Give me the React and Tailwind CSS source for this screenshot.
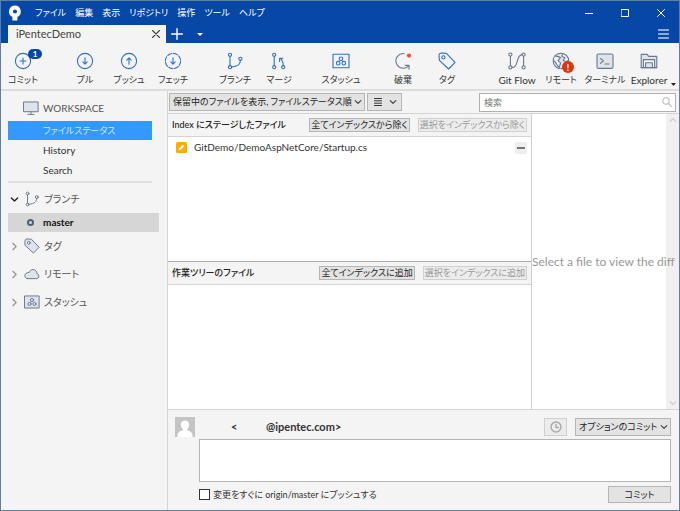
import React from "react";

const ICON = "h-[18px] w-[18px]";
const BLUE = "#2f6fd0";
const SLATE = "#6b7891";

function Svg({ children, color = BLUE, className = ICON, box = "0 0 18 18", width = 1.1 }) {
  return (
    <svg
      className={className}
      viewBox={box}
      fill="none"
      stroke={color}
      strokeWidth={width}
      strokeLinecap="round"
      strokeLinejoin="round"
      aria-hidden="true"
    >
      {children}
    </svg>
  );
}

function BranchShape() {
  return (
    <>
      <circle cx="4" cy="2.8" r="1.6" />
      <circle cx="4" cy="15.2" r="1.6" />
      <circle cx="14.400" cy="6.8" r="1.6" />
      <path d="M4 4.4v9.2M14.400 8.400c0 3.600-2.600 6-8.800 6.600" />
    </>
  );
}

function TagShape({ fill = "none" }) {
  return (
    <>
      <path d="M1 3.400A2.400 2.400 0 0 1 3.400 1l5 .4 8.600 9-6.400 6.600-9.200-8.600z" fill={fill} />
      <circle cx="5.4" cy="5.4" r="1.6" fill="#f4f4f4" />
    </>
  );
}

function StashShape({ fill = "none" }) {
  return (
    <>
      <rect x="1" y="2.2" width="16" height="13.6" fill={fill} />
      <circle cx="9" cy="6.8" r="1.8" />
      <circle cx="6.2" cy="11.2" r="1.8" />
      <circle cx="11.8" cy="11.2" r="1.8" />
    </>
  );
}

const commitIcon = (
  <Svg>
    <circle cx="9" cy="9" r="7.6" />
    <path d="M9 6v6M6 9h6" />
  </Svg>
);
const pullIcon = (
  <Svg>
    <circle cx="9" cy="9" r="7.6" />
    <path d="M9 5.8v6.2M6.8 9.9 9 12.1l2.2-2.2" />
  </Svg>
);
const pushIcon = (
  <Svg>
    <circle cx="9" cy="9" r="7.6" />
    <path d="M9 12.2V6M6.8 8.1 9 5.9l2.2 2.2" />
  </Svg>
);
const fetchIcon = (
  <Svg>
    <circle cx="9" cy="9" r="7.6" strokeDasharray="4.4 1.57" />
    <path d="M9 5.8v6.2M6.8 9.9 9 12.1l2.2-2.2" />
  </Svg>
);
const mergeIcon = (
  <Svg>
    <circle cx="4.2" cy="2.8" r="1.6" />
    <circle cx="4.2" cy="15.2" r="1.6" />
    <circle cx="13.2" cy="15.2" r="1.6" />
    <path d="M4.2 4.4v9.2M13.2 13.600c0-3-.2-5-2.600-7M9.600 9.400V6.200h3.200" />
  </Svg>
);
const discardIcon = (
  <Svg color={SLATE}>
    <path d="M10 1.6a7.3 7.3 0 1 0 4.6 12.2M15 17.2v-3.8h-3.8" />
    <circle cx="15" cy="3.6" r="2.100" fill="#ff4b2b" stroke="none" />
  </Svg>
);
const flowIcon = (
  <Svg color={SLATE}>
    <circle cx="2.4" cy="2.6" r="1.6" />
    <circle cx="2.4" cy="15.4" r="1.6" />
    <circle cx="15.6" cy="2.6" r="1.6" />
    <circle cx="15.6" cy="15.4" r="1.6" />
    <path d="M2.4 4.2v9.6M15.6 4.2v9.6M4 15.4h1c5.6 0 3-12.8 9-12.8" />
  </Svg>
);
const globeIcon = (
  <Svg color={SLATE}>
    <circle cx="9" cy="9" r="7.8" fill="#dfe3ea" />
    <path
      d="M3 4c2 .6 4 .2 5.4 1.6L6 8.6l2.6 2.2-1.4 4.6C4.6 14 4.8 10.400 1.600 8.600M10.500 1.600 10 4.400l3 1.400-1.800 2.600 3.200 1.400 2-1.600"
      fill="#f4f4f4"
    />
  </Svg>
);
const terminalIcon = (
  <Svg color={SLATE}>
    <rect x="1" y="2" width="16" height="14.400" rx="1.500" fill="#dfe3ea" />
    <path d="m4.500 6.500 3 2.400-3 2.400M9 12h4" />
  </Svg>
);
const explorerIcon = (
  <Svg color={SLATE}>
    <path d="M1.200 15.600V2.400h6l1.400 2h8.200v11.200z" fill="#dfe3ea" />
    <path d="M3.400 15.600V7.600h11.200v8" fill="#f4f4f4" />
    <path d="M5.600 15.600v-4.800h6.800v4.800M1.200 15.600h15.600" fill="#dfe3ea" />
  </Svg>
);

function Tool({ icon, label, badge, latin = false }) {
  return (
    <button className="relative flex w-11 flex-col items-center gap-[2px] whitespace-nowrap pt-[9px]">
      {icon}
      <span className={latin ? "text-[10px] leading-4 text-[#333]" : "text-[9px] leading-4 text-[#333]"}>
        {label}
      </span>
      {badge}
    </button>
  );
}

function Chevron({ className }) {
  return (
    <Svg className={className} box="0 0 8 8" color="currentColor" width={1.2}>
      <path d="m1.200 2.600 2.800 2.800 2.800-2.800" />
    </Svg>
  );
}

function DropDown({ label, className }) {
  return (
    <div className={"relative h-[18px] shrink-0 " + className}>
      <select
        aria-label={label}
        className="h-full w-full appearance-none border border-[#b5b5b5] bg-[#e3e3e3] pl-[3px] pr-3 text-[9px] text-[#222]"
      >
        <option>{label}</option>
      </select>
      <Chevron className="pointer-events-none absolute right-[3px] top-1/2 h-2 w-2 -translate-y-1/2 text-[#444]" />
    </div>
  );
}

function StageHeader({ title, all, selected }) {
  return (
    <div className="flex h-[23px] shrink-0 items-center whitespace-nowrap border-b border-[#d4d4d4] pl-1 pr-1">
      <h2 className="flex-1 text-[9px] font-medium text-[#222]">{title}</h2>
      <button className="h-[14px] border border-[#b5b5b5] bg-[#e3e3e3] px-px text-[9px] leading-3 text-[#222]">
        {all}
      </button>
      <button
        disabled
        className="ml-2 h-[14px] border border-[#d0d0d0] bg-[#ececec] px-px text-[9px] leading-3 text-[#999]"
      >
        {selected}
      </button>
    </div>
  );
}

function Section({ open, icon, label }) {
  return (
    <button className="flex h-7 w-full items-center pl-2 text-left text-[10px] text-[#555]">
      <Chevron
        className={open ? "h-[9px] w-[9px] text-[#222]" : "h-[9px] w-[9px] -rotate-90 text-[#999]"}
      />
      <span className="ml-[5px] mr-1">{icon}</span>
      {label}
    </button>
  );
}

const sideIcon = "h-4 w-4";

export default function App() {
  return (
    <div className="flex min-h-screen flex-col overflow-hidden border border-[#5f7fa6] bg-[#f4f4f4] font-['Lato','Noto_Sans_CJK_JP',sans-serif] text-[10px] text-[#333] [font-feature-settings:'palt']">
      <header className="bg-[#0747a6] text-white">
        <div className="flex h-6 items-center">
          <svg className="ml-[7px] mr-[13px] h-4 w-[14px]" viewBox="0 0 14 16" aria-hidden="true">
            <path
              d="M7 .5a6 6 0 0 0-2.600 11.400V15.500h5v-3.600A6 6 0 0 0 7 .5zm0 4a2 2 0 1 1 0 4.100 2 2 0 0 1 0-4.100z"
              fill="#fff"
              fillRule="evenodd"
            />
          </svg>
          <nav className="flex flex-1 gap-[9px] whitespace-nowrap text-[9px]">
            <button>ファイル</button>
            <button>編集</button>
            <button>表示</button>
            <button>リポジトリ</button>
            <button>操作</button>
            <button>ツール</button>
            <button>ヘルプ</button>
          </nav>
          <div className="flex">
            <button aria-label="最小化" className="flex h-6 w-9 items-center justify-center">
              <Svg className="h-2 w-2" box="0 0 8 8" color="#fff" width={1}>
                <path d="M0 4.500h8" />
              </Svg>
            </button>
            <button aria-label="最大化" className="flex h-6 w-9 items-center justify-center">
              <Svg className="h-2 w-2" box="0 0 8 8" color="#fff" width={1}>
                <path d="M.5.5h7v7h-7z" />
              </Svg>
            </button>
            <button aria-label="閉じる" className="flex h-6 w-9 items-center justify-center">
              <Svg className="h-2 w-2" box="0 0 8 8" color="#fff" width={1}>
                <path d="m.5.500 7 7m0-7-7 7" />
              </Svg>
            </button>
          </div>
        </div>
        <div className="flex h-[18px] items-center">
          <div className="ml-[7px] flex h-full w-[158px] items-center bg-[#f4f4f4] pl-2 pr-[6px] text-[#444]">
            <button className="flex-1 text-left text-[11px]">iPentecDemo</button>
            <button aria-label="タブを閉じる">
              <Svg className="h-2 w-2" box="0 0 8 8" color="#444" width={1.1}>
                <path d="m.5.500 7 7m0-7-7 7" />
              </Svg>
            </button>
          </div>
          <button aria-label="新しいタブ" className="ml-[5px]">
            <Svg className="h-3 w-3" box="0 0 12 12" color="#fff" width={1.400}>
              <path d="M6 .7v10.600M.7 6h10.600" />
            </Svg>
          </button>
          <button aria-label="タブ一覧" className="ml-[14px]">
            <svg className="h-[3px] w-[6px]" viewBox="0 0 6 3" fill="#fff" aria-hidden="true">
              <path d="M0 0h6L3 3z" />
            </svg>
          </button>
          <button aria-label="メニュー" className="ml-auto mr-[10px]">
            <Svg className="h-[10px] w-[11px]" box="0 0 11 10" color="#b9cbe6" width={1.500}>
              <path d="M.5 1h10M.5 5h10M.5 9h10" />
            </Svg>
          </button>
        </div>
      </header>

      <div className="relative flex h-[48px] justify-between border-b-2 border-[#dcdcdc] pr-2">
        <div className="flex gap-[18px]">
          <Tool
            icon={commitIcon}
            label="コミット"
            badge={
              <span className="absolute left-[27px] top-[6px] h-[10px] w-[14px] rounded-[5px] bg-[#0747a6] text-center text-[8px] font-bold leading-[10px] text-white">
                1
              </span>
            }
          />
          <div className="flex">
            <Tool icon={pullIcon} label="プル" />
            <Tool icon={pushIcon} label="プッシュ" />
            <Tool icon={fetchIcon} label="フェッチ" />
          </div>
          <div className="flex">
            <Tool icon={<Svg><BranchShape /></Svg>} label="ブランチ" />
            <Tool icon={mergeIcon} label="マージ" />
          </div>
          <Tool icon={<Svg><StashShape /></Svg>} label="スタッシュ" />
          <div className="flex">
            <Tool icon={discardIcon} label="破棄" />
            <Tool icon={<Svg><TagShape /></Svg>} label="タグ" />
          </div>
        </div>
        <div className="flex">
          <Tool latin icon={flowIcon} label="Git Flow" />
          <Tool
            icon={globeIcon}
            label="リモート"
            badge={
              <span className="absolute left-[23px] top-[18px] h-3 w-3 rounded-full bg-[#de350b] text-center text-[10px] font-bold leading-3 text-white">
                !
              </span>
            }
          />
          <Tool icon={terminalIcon} label="ターミナル" />
          <Tool latin icon={explorerIcon} label="Explorer" />
        </div>
        <svg className="absolute bottom-[3px] right-[3px] h-[3px] w-[5px]" viewBox="0 0 5 3" aria-hidden="true">
          <path d="M0 0h5L2.500 3z" fill="#222" />
        </svg>
      </div>

      <div className="flex flex-1">
        <aside className="w-[167px] shrink-0 border-r border-[#d4d4d4] pl-[7px] pr-2 pt-[6px]">
          <div className="flex h-[22px] items-center pl-[15px] text-[10px] text-[#555]">
            <Svg className="mr-1 h-4 w-4" color={SLATE}>
              <path d="M1 2.200h16v11H1z" fill="#dfe3ea" />
              <path d="M9 13.200v3M5.500 16.200h7" />
            </Svg>
            WORKSPACE
          </div>
          <div className="mr-[7px] mt-[2px] flex flex-col border-b-2 border-[#dedede] pb-[1px] text-[10px]">
            <button className="h-[19px] bg-[#3399ff] pl-[35px] text-left text-[9px] text-[#d5e6fa]">ファイルステータス</button>
            <button className="h-5 pl-[35px] text-left">History</button>
            <button className="h-5 pl-[35px] text-left">Search</button>
          </div>
          <div className="-ml-[6px] pt-[2px]">
            <Section
              open
              icon={<Svg className={sideIcon} color={SLATE}><BranchShape /></Svg>}
              label="ブランチ"
            />
          </div>
          <button className="flex h-[19px] w-full items-center bg-[#d6d6d6] pl-[19px] text-[10px] font-bold text-[#111]">
            <span className="mr-[9px] h-[7px] w-[7px] rounded-full border-2 border-[#505f79]" />
            master
          </button>
          <div className="-ml-[6px]">
            <Section
              icon={<Svg className={sideIcon} color={SLATE}><TagShape fill="#dfe3ea" /></Svg>}
              label="タグ"
            />
            <Section
              icon={
                <Svg className={sideIcon} color={SLATE}>
                  <path
                    d="M4 14.200h10.200a2.800 2.800 0 0 0 .5-5.500C14.500 5.800 12.600 4 10 4 7.900 4 6.300 5.300 5.800 7.300 3 7.200 1 8.600 1 11c0 1.800 1.200 3.200 3 3.200z"
                    fill="#dfe3ea"
                  />
                </Svg>
              }
              label="リモート"
            />
            <Section
              icon={<Svg className={sideIcon} color={SLATE}><StashShape fill="#dfe3ea" /></Svg>}
              label="スタッシュ"
            />
          </div>
        </aside>

        <main className="flex min-w-0 flex-1 flex-col">
          <div className="flex h-[23px] items-center gap-[2px] border-b border-[#d4d4d4] pl-[1px] pr-[3px]">
            <DropDown label="保留中のファイルを表示, ファイルステータス順" className="min-w-[187px]" />
            <button
              aria-label="表示形式"
              className="flex h-[18px] w-[35px] items-center justify-between border border-[#b5b5b5] bg-[#e3e3e3] pl-[6px] pr-1 text-[#444]"
            >
              <Svg className="h-2 w-2" box="0 0 8 8" color="#333" width={1}>
                <path d="M.5.500h7M.5 2.800h7M.5 5.200h7M.5 7.500h7" />
              </Svg>
              <Chevron className="h-2 w-2" />
            </button>
            <div className="relative ml-auto h-[19px] w-[197px]">
              <input
                type="search"
                aria-label="検索"
                placeholder="検索"
                className="block h-full w-full border border-[#b0b0b0] bg-white pl-1 pr-5 text-[9px] placeholder:text-[#777]"
              />
              <Svg className="absolute right-1 top-1 h-[10px] w-[10px]" box="0 0 10 10" color="#bbb" width={1.100}>
                <circle cx="4" cy="4" r="3.200" />
                <path d="m6.500 6.500 3 3" />
              </Svg>
            </div>
          </div>

          <div className="flex flex-1">
            <section className="flex w-[364px] shrink-0 flex-col border-r border-[#d0d0d0]">
              <StageHeader
                title="Index にステージしたファイル"
                all="全てインデックスから除く"
                selected="選択をインデックスから除く"
              />
              <div className="h-[124px] shrink-0 bg-white">
                <div className="flex items-center pl-2 pr-1 pt-[3px]">
                  <svg className="mr-[7px] h-[11px] w-[11px]" viewBox="0 0 11 11" aria-hidden="true">
                    <rect width="11" height="11" rx="1.500" fill="#ffab00" />
                    <path d="M2.400 8.600 3 6.500l4-4L8.500 4l-4 4z" fill="#fff" />
                  </svg>
                  <span className="flex-1 text-[10px]">GitDemo/DemoAspNetCore/Startup.cs</span>
                  <button
                    aria-label="インデックスから除く"
                    className="flex h-3 w-3 items-center justify-center rounded-[2px] bg-[#eee]"
                  >
                    <span className="h-[2px] w-2 bg-[#777]" />
                  </button>
                </div>
              </div>
              <div className="border-t border-[#aaa]">
                <StageHeader
                  title="作業ツリーのファイル"
                  all="全てインデックスに追加"
                  selected="選択をインデックスに追加"
                />
              </div>
              <div className="min-h-[120px] flex-1 bg-white" />
            </section>
            <section className="relative flex min-w-0 flex-1 items-center overflow-hidden bg-white">
              <div className="absolute inset-y-0 right-0 flex w-[13px] flex-col items-center justify-between bg-[#f0f0f0] py-[2px] text-[#ccc]">
                <Chevron className="h-2 w-2 rotate-180" />
                <Chevron className="h-2 w-2" />
              </div>
              <p className="relative whitespace-nowrap text-[12px] text-[#999]">Select a file to view the diff</p>
            </section>
          </div>

          <form className="border-t border-[#d4d4d4] pb-[7px] pl-[7px] pr-2 pt-[7px]" onSubmit={(e) => e.preventDefault()}>
            <div className="flex h-5 items-center">
              <svg className="h-5 w-5" viewBox="0 0 20 20" aria-hidden="true">
                <path d="M0 0h20v20H0z" fill="#c4c4c4" />
                <path d="M10 3.500c2.600 0 4.200 1.800 4.200 4.200 0 1.800-.8 3.400-2 4.200v1.300c2.500.6 5 1.800 5.300 4.300V20h-15v-2.500c.3-2.500 2.800-3.700 5.300-4.300v-1.300c-1.200-.8-2-2.400-2-4.200 0-2.400 1.600-4.200 4.200-4.200z" fill="#fff" />
              </svg>
              <span className="ml-9 w-[35px] text-[11px] font-bold">&lt;</span>
              <span className="flex-1 text-[11px] font-bold">@ipentec.com&gt;</span>
              <button
                type="button"
                aria-label="履歴"
                disabled
                className="mr-2 flex h-[18px] w-[23px] items-center justify-center border border-[#d0d0d0] bg-[#ececec]"
              >
                <Svg className="h-3 w-3" box="0 0 12 12" color="#aaa" width={1.400}>
                  <circle cx="6" cy="6" r="5" />
                  <path d="M6 3.400V6.500h2.400" />
                </Svg>
              </button>
              <DropDown label="オプションのコミット" className="min-w-[89px]" />
            </div>
            <textarea
              aria-label="コミットメッセージ"
              className="ml-6 mt-[2px] block h-[43px] w-[calc(100%-24px)] resize-none border border-[#b5b5b5] bg-white p-1"
            />
            <div className="ml-6 mt-1 flex items-center justify-between">
              <label className="flex items-center gap-[3px] text-[9px]">
                <input type="checkbox" className="h-[11px] w-[11px] appearance-none border border-[#333] bg-white checked:bg-[#3399ff]" />
                変更をすぐに origin/master にプッシュする
              </label>
              <button className="h-[17px] w-[63px] border border-[#b5b5b5] bg-[#e3e3e3] text-[9px] leading-[15px] text-[#222]">
                コミット
              </button>
            </div>
          </form>
        </main>
      </div>
    </div>
  );
}
